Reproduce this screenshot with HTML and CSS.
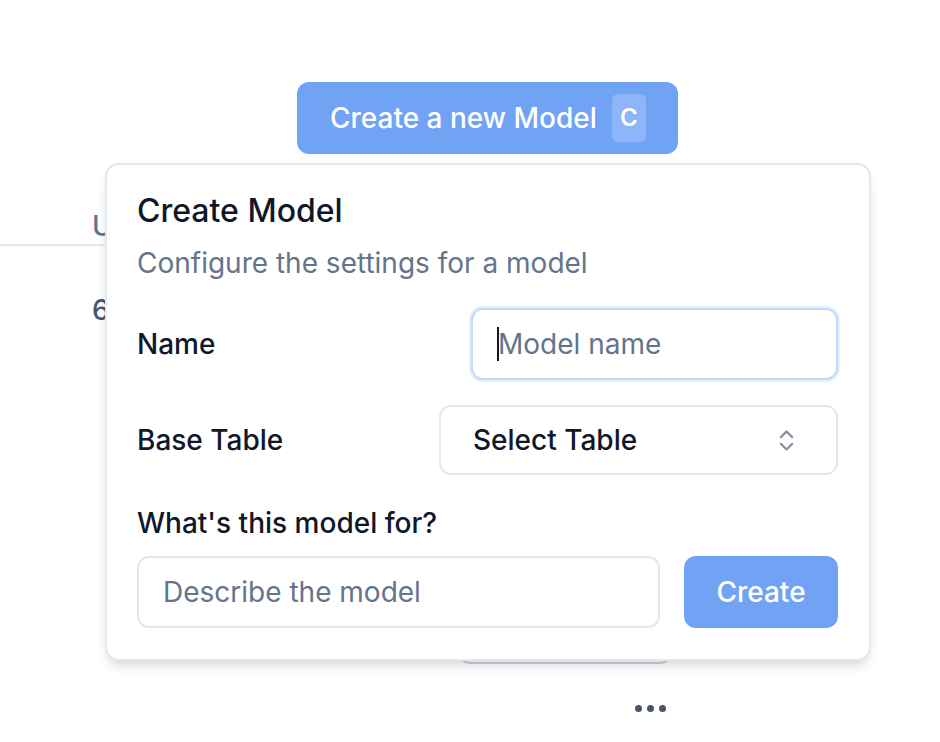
FILE: index.html
```html
<!DOCTYPE html>
<html lang="en">
<head>
<meta charset="utf-8">
<title>Create Model</title>
<link rel="stylesheet" href="styles.css">
</head>
<body>
<div class="page">
  <div class="toolbar">
    <button class="new-btn"><span>Create a new Model</span><kbd class="kbd">C</kbd></button>
  </div>
  <div class="table">
    <div class="thead"><span class="th">U</span></div>
    <div class="trow"><span class="td">6</span></div>
  </div>
  <div class="pager"></div>
  <div class="more"><span class="dot"></span><span class="dot"></span><span class="dot"></span></div>
</div>

<div class="popover">
  <h2 class="pop-title">Create Model</h2>
  <p class="pop-desc">Configure the settings for a model</p>
  <div class="field-row">
    <label class="label">Name</label>
    <div class="input name-input focused"><span class="caret"></span><span class="ph">Model name</span></div>
  </div>
  <div class="field-row select-row">
    <label class="label">Base Table</label>
    <div class="select">
      <span>Select Table</span>
      <svg class="chev" viewBox="0 0 24 24" width="27" height="27" fill="none" stroke="currentColor" stroke-width="2" stroke-linecap="round" stroke-linejoin="round"><path d="m7 15 5 5 5-5"/><path d="m7 9 5-5 5 5"/></svg>
    </div>
  </div>
  <label class="label purpose-label">What's this model for?</label>
  <div class="submit-row">
    <div class="input describe-input"><span class="ph">Describe the model</span></div>
    <button class="create-btn">Create</button>
  </div>
</div>
</body>
</html>
```
FILE: styles.css
```css
* { box-sizing: border-box; }
html, body { margin: 0; padding: 0; background: #ffffff; }
body {
  font-family: Inter, "Noto Sans", sans-serif;
  color: #0f172a;
  width: 940px;
  height: 742px;
  overflow: hidden;
  position: relative;
}
.page { padding-top: 82px; }
.toolbar { padding-left: 297px; }
.new-btn {
  display: flex;
  align-items: center;
  gap: 15px;
  width: 381px;
  height: 72px;
  padding: 0 32px 0 33px;
  border: 0;
  border-radius: 12px;
  background: #71a3f5;
  color: #ffffff;
  font: 500 28px/1 Inter, sans-serif;
}
.kbd {
  display: flex;
  align-items: center;
  justify-content: center;
  width: 34px;
  height: 48px;
  border-radius: 6px;
  background: rgba(255, 255, 255, 0.2);
  font: 600 24px/1 Inter, sans-serif;
  color: #ffffff;
}
.table { width: 820px; }
.thead {
  padding: 54px 0 0 92px;
  line-height: 36px;
  border-bottom: 2px solid #e2e8f0;
  font-size: 28px;
  font-weight: 500;
  color: #64748b;
}
.trow {
  padding: 44px 0 0 92px;
  line-height: 40px;
  font-size: 28px;
  font-weight: 500;
  color: #475569;
}
.pager {
  margin: 262px 0 0 458px;
  width: 214px;
  height: 72px;
  border: 2px solid #cbd5e1;
  border-radius: 12px;
}
.more {
  display: flex;
  gap: 5px;
  margin: 41px 0 0 635px;
}
.dot {
  width: 7px;
  height: 7px;
  border-radius: 50%;
  background: #475569;
}

.popover {
  position: absolute;
  left: 105px;
  top: 163px;
  width: 766px;
  height: 498px;
  padding: 30px 31px 31px 30px;
  background: #ffffff;
  border: 2px solid #e2e8f0;
  border-radius: 14px;
  box-shadow: 0 8px 12px -2px rgba(0, 0, 0, 0.1), 0 4px 8px -4px rgba(0, 0, 0, 0.1);
  display: flex;
  flex-direction: column;
}
.pop-title {
  margin: 0;
  font: 500 32px/32px Inter, sans-serif;
  color: #0f172a;
}
.pop-desc {
  margin: 16px 0 0;
  font: 400 28px/40px Inter, sans-serif;
  color: #64748b;
}
.field-row {
  margin-top: 25px;
  display: flex;
  align-items: center;
  justify-content: space-between;
  height: 72px;
}
.select-row { height: 70px; }
.label {
  font: 500 28px/40px Inter, sans-serif;
  color: #0f172a;
}
.input {
  display: flex;
  align-items: center;
  height: 72px;
  padding: 0 24px;
  border: 2px solid #e2e8f0;
  border-radius: 12px;
  background: #ffffff;
  font: 400 28px/1 Inter, sans-serif;
}
.name-input { width: 367px; }
.focused {
  border-color: #c6d9f8;
  box-shadow: 0 0 0 2px rgba(191, 219, 254, 0.45);
}
.caret {
  display: inline-block;
  width: 2px;
  height: 34px;
  background: #0f172a;
  margin-right: -1px;
}
.ph { color: #64748b; }
.select {
  display: flex;
  align-items: center;
  justify-content: space-between;
  width: 399px;
  height: 70px;
  padding: 0 36px 0 32px;
  border: 2px solid #e2e8f0;
  border-radius: 12px;
  font: 500 28px/1 Inter, sans-serif;
  color: #0f172a;
}
.chev { color: #8a919c; }
.purpose-label { margin-top: 28px; }
.submit-row {
  margin-top: 13px;
  display: flex;
  gap: 24px;
  height: 72px;
}
.describe-input { flex: 1; }
.create-btn {
  width: 154px;
  height: 72px;
  border: 0;
  border-radius: 12px;
  background: #71a3f5;
  color: #ffffff;
  font: 500 28px/1 Inter, sans-serif;
}
```
